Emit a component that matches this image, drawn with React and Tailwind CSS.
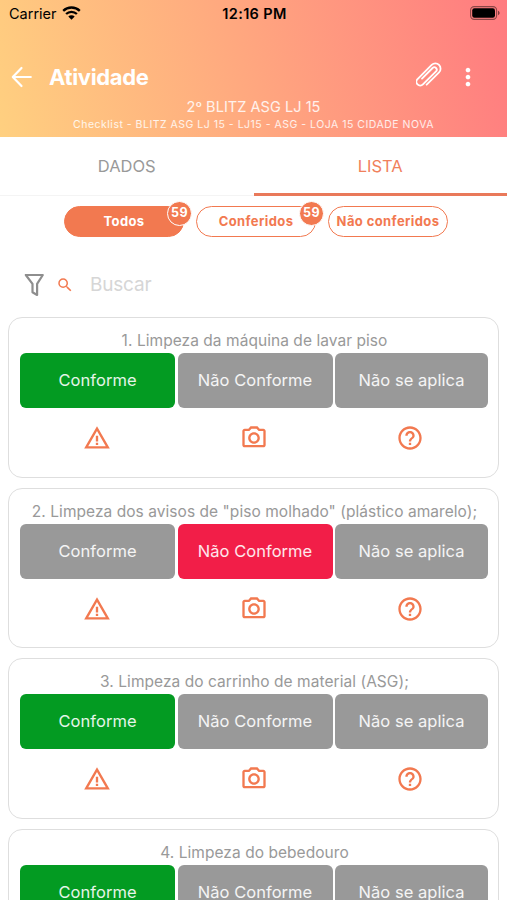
import { useState } from "react";
import {
  MdHelpOutline,
  MdMoreVert,
  MdOutlineCameraAlt,
  MdSearch,
  MdWarningAmber,
} from "react-icons/md";

const ITEMS = [
  { id: 1, title: "Limpeza da máquina de lavar piso", answer: "yes" },
  {
    id: 2,
    title: 'Limpeza dos avisos de "piso molhado" (plástico amarelo);',
    answer: "no",
  },
  { id: 3, title: "Limpeza do carrinho de material (ASG);", answer: "yes" },
  { id: 4, title: "Limpeza do bebedouro", answer: "yes" },
];

const OPTIONS = [
  { value: "yes", label: "Conforme", active: "bg-[#039b22]" },
  { value: "no", label: "Não Conforme", active: "bg-[#f21e48]" },
  { value: "na", label: "Não se aplica", active: "bg-[#f27950]" },
];

const FILTERS = [
  { id: "all", label: "Todos", count: 59 },
  { id: "checked", label: "Conferidos", count: 59 },
  { id: "unchecked", label: "Não conferidos" },
];

function StatusBar() {
  return (
    <div className="flex h-7 items-center justify-between pl-[9px] pr-[7px] text-black">
      <div className="flex w-[120px] items-center gap-[5px]">
        <span className="text-[14.5px]">Carrier</span>
        <svg className="mb-0.5" width="19" height="14" viewBox="0 0 19 14" fill="none">
          <path d="M1.2 4.9a11.8 11.8 0 0 1 16.6 0" stroke="currentColor" strokeWidth="2.3" />
          <path d="M4.1 8a7.7 7.7 0 0 1 10.8 0" stroke="currentColor" strokeWidth="2.3" />
          <path d="M9.5 13.8 6.3 10.5a4.5 4.5 0 0 1 6.4 0z" fill="currentColor" />
        </svg>
      </div>
      <span className="text-[14.5px] font-semibold tracking-[0.35px]">12:16 PM</span>
      <div className="mb-0.5 flex w-[120px] justify-end">
        <svg width="30" height="14" viewBox="0 0 30 14" fill="none">
          <rect x="0.6" y="0.6" width="26" height="12.8" rx="3.6" stroke="#000" strokeOpacity="0.45" strokeWidth="1.1" />
          <rect x="2.2" y="2.2" width="22.8" height="9.6" rx="2.2" fill="#000" />
          <path d="M28 4.8c1 .4 1.6 1.2 1.6 2.2s-.6 1.8-1.6 2.2z" fill="#000" fillOpacity="0.5" />
        </svg>
      </div>
    </div>
  );
}

function PaperClip() {
  return (
    <svg
      className="mb-[3px] mr-3 size-[26px]"
      viewBox="-13 -13 26 26"
      fill="none"
      stroke="currentColor"
      strokeWidth="1.8"
      strokeLinecap="round"
    >
      <path
        transform="rotate(45)"
        d="M5.2 8.5V-9a5.2 5.2 0 0 0-10.4 0V11a3.8 3.8 0 0 0 7.6 0V-7.5a2.4 2.4 0 0 0-4.8 0V7.5"
      />
    </svg>
  );
}

function Header() {
  return (
    <header className="h-[137px] bg-[linear-gradient(75deg,#ffd080_0%,#ffa87f_48%,#ff7b80_100%)] text-white">
      <StatusBar />
      <div className="flex h-[70px] items-center pl-[11px] pr-[25px] pt-[27px]">
        <svg width="22" height="22" viewBox="0 0 22 22" fill="none" stroke="currentColor" strokeWidth="2.2" strokeLinecap="round" strokeLinejoin="round">
          <path d="M10.5 2 1.8 11l8.7 9M2.2 11h17.6" />
        </svg>
        <h1 className="ml-4 flex-1 text-[22px] font-bold leading-none tracking-[-0.35px]">
          Atividade
        </h1>
        <PaperClip />
        <MdMoreVert className="size-7" />
      </div>
      <div className="flex flex-col items-center text-white/85">
        <p className="text-[14.5px] leading-[18px] tracking-[0.05px]">2º BLITZ ASG LJ 15</p>
        <p className="text-[10.5px] leading-[17px] tracking-[0.5px]">
          Checklist - BLITZ ASG LJ 15 - LJ15 - ASG - LOJA 15 CIDADE NOVA
        </p>
      </div>
    </header>
  );
}

function Tabs() {
  return (
    <nav className="grid h-[59px] grid-cols-2 text-[16.5px]">
      <button className="border-b border-[#f4f4f4] text-[#999]">DADOS</button>
      <button className="border-b-[3px] border-[#e9795a] pt-0.5 text-[#f0805c]">LISTA</button>
    </nav>
  );
}

function Filters({ selected, onSelect }) {
  return (
    <div className="flex gap-3 pl-16 pt-[10px]">
      {FILTERS.map((filter) => (
        <button
          key={filter.id}
          onClick={() => onSelect(filter.id)}
          className={`relative h-[31px] w-[120px] whitespace-nowrap rounded-full border border-[#f27950] pt-px text-[13px] font-bold tracking-[0.4px] ${
            selected === filter.id
              ? "bg-[#f27950] text-white"
              : "bg-white text-[#f27950]"
          }`}
        >
          {filter.label}
          {filter.count && (
            <span className="absolute -right-[9px] -top-[6px] flex size-[25px] items-center justify-center rounded-full border border-white bg-[#f27950] text-[12.5px] text-white">
              {filter.count}
            </span>
          )}
        </button>
      ))}
    </div>
  );
}

function SearchBar() {
  return (
    <div className="flex h-[80px] items-center pl-6 pt-[15px]">
      <svg width="21" height="24" viewBox="0 0 21 24" fill="none" stroke="#8e8e8e" strokeWidth="2.2" strokeLinejoin="round">
        <path d="M1.8 2h17l-5.7 8.8V22l-4.6-2.8v-8.4z" />
      </svg>
      <MdSearch className="ml-[11px] size-[18px] text-[#f27950]" />
      <input
        placeholder="Buscar"
        className="ml-4 w-72 pt-0.5 text-[19px] tracking-[-0.2px] outline-none placeholder:text-[#d6d6d6]"
      />
    </div>
  );
}

function ChecklistCard({ item }) {
  return (
    <li className="h-[160.5px] shrink-0 rounded-[14px] border-[1.5px] border-[#dedede] px-[11px] pt-3">
      <p className="whitespace-nowrap pl-0.5 text-center text-[15.5px] leading-[21px] tracking-[0.05px] text-[#999]">
        {item.id}. {item.title}
      </p>
      <div className="mt-0.5 grid h-[55px] grid-cols-[155px_155px_153px] gap-[2.5px]">
        {OPTIONS.map((option) => (
          <button
            key={option.value}
            className={`rounded-md text-[16.5px] tracking-[0.05px] text-white/90 ${
              item.answer === option.value ? option.active : "bg-[#999]"
            }`}
          >
            {option.label}
          </button>
        ))}
      </div>
      <div className="mt-4 flex justify-between px-[63px] text-[#f27950]">
        <MdWarningAmber className="size-7" />
        <MdOutlineCameraAlt className="size-7" />
        <MdHelpOutline className="size-7" />
      </div>
    </li>
  );
}

export default function App() {
  const [filter, setFilter] = useState("all");

  return (
    <main className="h-[900px] w-[507px] overflow-hidden bg-white font-['Inter','Liberation_Sans',sans-serif]">
      <Header />
      <Tabs />
      <Filters selected={filter} onSelect={setFilter} />
      <SearchBar />
      <ul className="flex flex-col gap-[10px] px-2">
        {ITEMS.map((item) => (
          <ChecklistCard key={item.id} item={item} />
        ))}
      </ul>
    </main>
  );
}
